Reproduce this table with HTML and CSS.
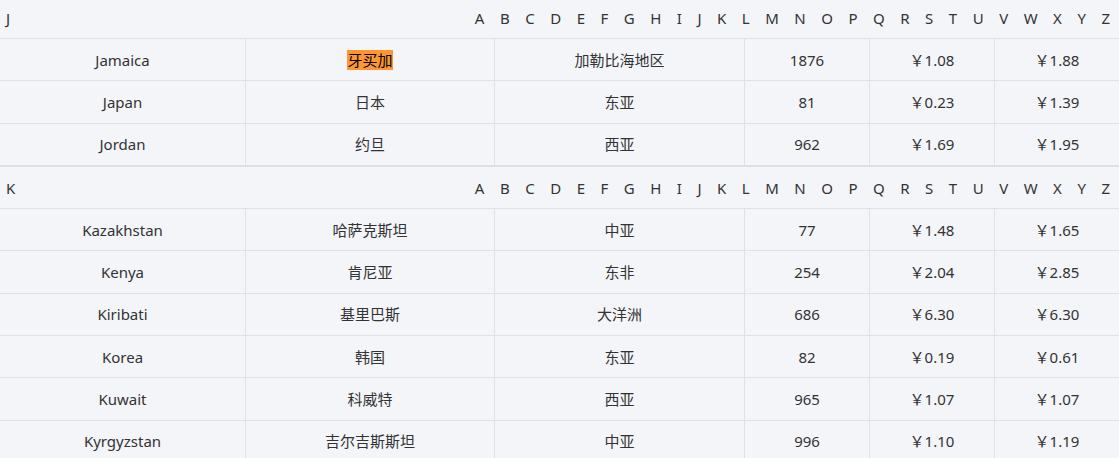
FILE: index.html
```html
<!DOCTYPE html>
<html lang="zh">
<head>
<meta charset="utf-8">
<title>Countries</title>
<link rel="stylesheet" href="styles.css">
</head>
<body>
<div class="list">
  <section class="group first">
    <div class="group-head">
      <span class="group-letter">J</span>
      <nav class="index">
        <span>A</span><span>B</span><span>C</span><span>D</span><span>E</span><span>F</span><span>G</span><span>H</span><span>I</span><span>J</span><span>K</span><span>L</span><span>M</span><span>N</span><span>O</span><span>P</span><span>Q</span><span>R</span><span>S</span><span>T</span><span>U</span><span>V</span><span>W</span><span>X</span><span>Y</span><span>Z</span>
      </nav>
    </div>
    <div class="row"><div class="cell">Jamaica</div><div class="cell"><mark class="hit">牙买加</mark></div><div class="cell">加勒比海地区</div><div class="cell">1876</div><div class="cell">￥1.08</div><div class="cell">￥1.88</div></div>
    <div class="row"><div class="cell">Japan</div><div class="cell">日本</div><div class="cell">东亚</div><div class="cell">81</div><div class="cell">￥0.23</div><div class="cell">￥1.39</div></div>
    <div class="row"><div class="cell">Jordan</div><div class="cell">约旦</div><div class="cell">西亚</div><div class="cell">962</div><div class="cell">￥1.69</div><div class="cell">￥1.95</div></div>
  </section>
  <section class="group">
    <div class="group-head">
      <span class="group-letter">K</span>
      <nav class="index">
        <span>A</span><span>B</span><span>C</span><span>D</span><span>E</span><span>F</span><span>G</span><span>H</span><span>I</span><span>J</span><span>K</span><span>L</span><span>M</span><span>N</span><span>O</span><span>P</span><span>Q</span><span>R</span><span>S</span><span>T</span><span>U</span><span>V</span><span>W</span><span>X</span><span>Y</span><span>Z</span>
      </nav>
    </div>
    <div class="row"><div class="cell">Kazakhstan</div><div class="cell">哈萨克斯坦</div><div class="cell">中亚</div><div class="cell">77</div><div class="cell">￥1.48</div><div class="cell">￥1.65</div></div>
    <div class="row"><div class="cell">Kenya</div><div class="cell">肯尼亚</div><div class="cell">东非</div><div class="cell">254</div><div class="cell">￥2.04</div><div class="cell">￥2.85</div></div>
    <div class="row"><div class="cell">Kiribati</div><div class="cell">基里巴斯</div><div class="cell">大洋洲</div><div class="cell">686</div><div class="cell">￥6.30</div><div class="cell">￥6.30</div></div>
    <div class="row"><div class="cell">Korea</div><div class="cell">韩国</div><div class="cell">东亚</div><div class="cell">82</div><div class="cell">￥0.19</div><div class="cell">￥0.61</div></div>
    <div class="row"><div class="cell">Kuwait</div><div class="cell">科威特</div><div class="cell">西亚</div><div class="cell">965</div><div class="cell">￥1.07</div><div class="cell">￥1.07</div></div>
    <div class="row"><div class="cell">Kyrgyzstan</div><div class="cell">吉尔吉斯斯坦</div><div class="cell">中亚</div><div class="cell">996</div><div class="cell">￥1.10</div><div class="cell">￥1.19</div></div>
  </section>
</div>
</body>
</html>
```

FILE: styles.css
```css
html, body {
  margin: 0;
  padding: 0;
  background: #f4f5f9;
  overflow: hidden;
}
body {
  font-family: "Noto Sans", "Noto Sans CJK SC", sans-serif;
  font-size: 15px;
  line-height: 20px;
  color: #333333;
}
.list {
  width: 1119px;
}
.group.first {
  margin-top: -3px;
}
.group + .group {
  border-top: 1px solid #dcdde3;
}
.group-head {
  display: flex;
  align-items: center;
  justify-content: space-between;
  height: 42px;
  box-sizing: border-box;
  border-bottom: 1px solid #dfe1e6;
}
.group-letter {
  padding-left: 6px;
}
.index {
  display: flex;
}
.index span {
  padding: 0 7.75px;
}
.index span:last-child {
  padding-right: 9px;
}
.row {
  display: grid;
  grid-template-columns: 246px 249px 250px 125px 125px 1fr;
  height: 42.35px;
  border-bottom: 1px solid #dfe1e6;
  box-sizing: border-box;
}
.cell {
  display: flex;
  align-items: center;
  justify-content: center;
  border-right: 1px solid #dfe1e6;
  box-sizing: border-box;
}
.cell:last-child {
  border-right: none;
}
.hit {
  background: #ff9632;
  color: #000;
  padding: 0;
}
```
